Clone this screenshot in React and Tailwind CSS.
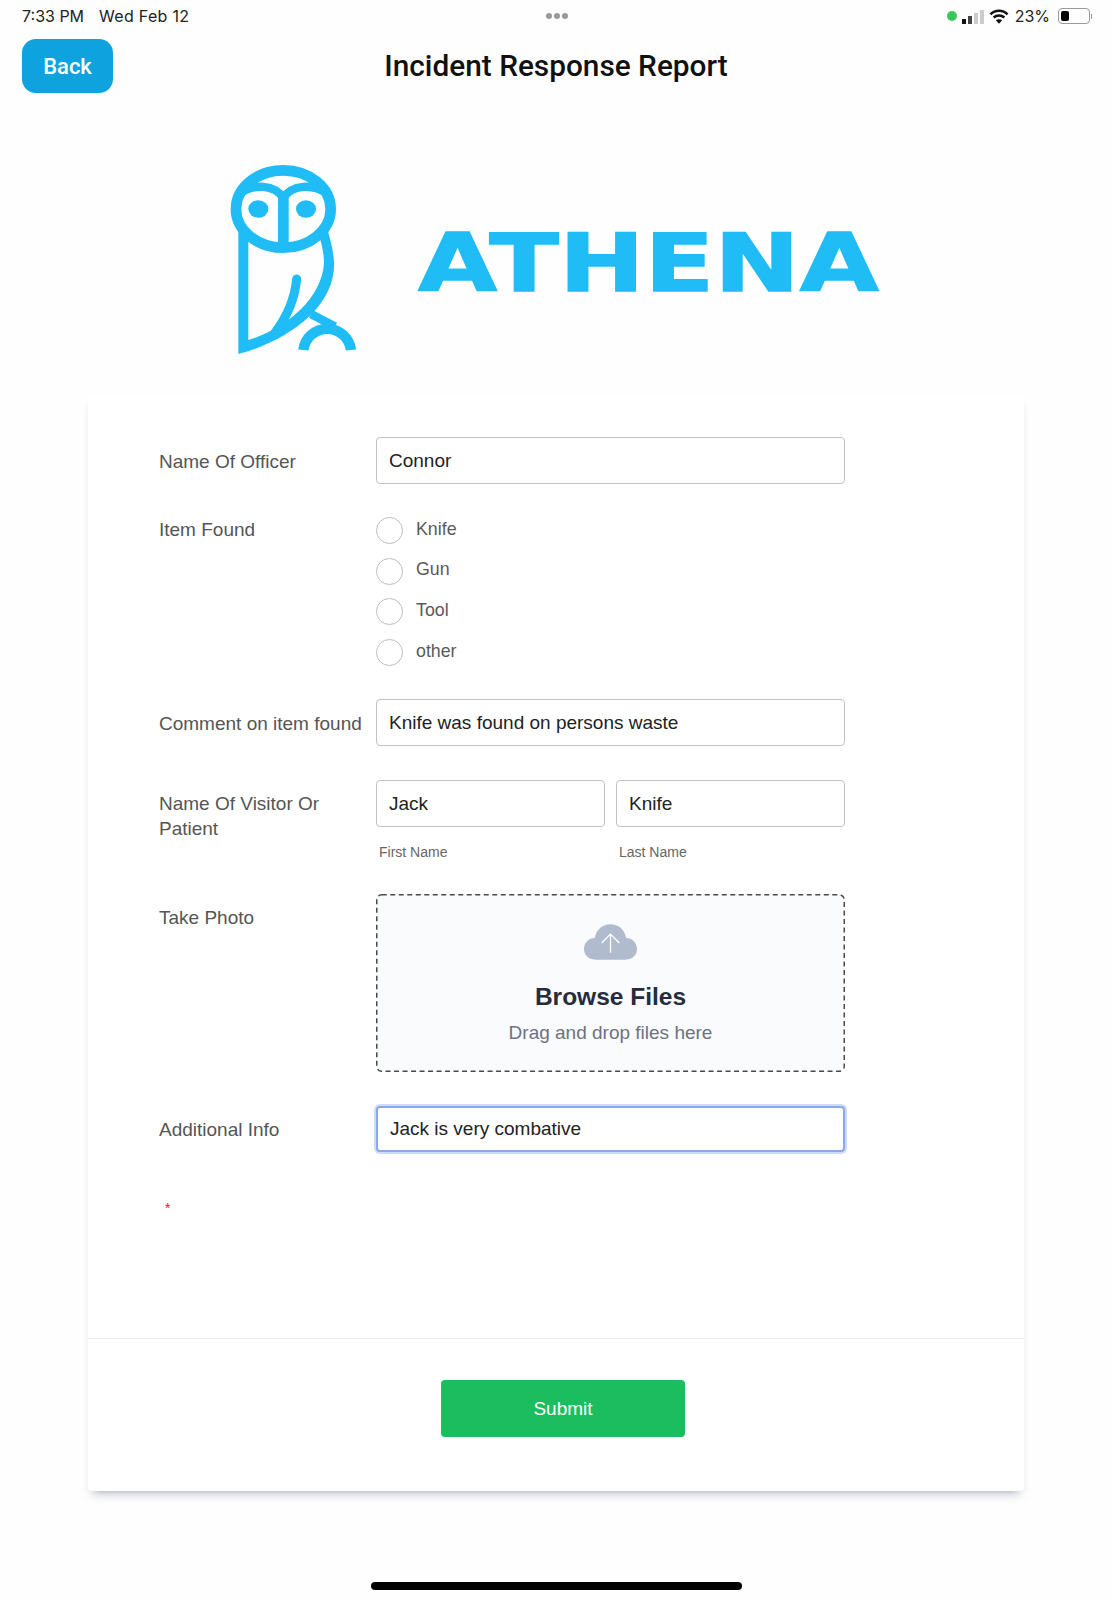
const sans = "font-['Liberation_Sans',Arial,sans-serif]";

function Owl() {
  return (
    <g fill="none" stroke="#1fbcf6" strokeWidth="32">
      <ellipse cx="220" cy="177" rx="142" ry="116" />
      <path d="M88 132 C130 100 195 103 220 145 C245 103 310 100 352 132" strokeWidth="25" />
      <path d="M220 140 V300" />
      <ellipse cx="145" cy="177" rx="30" ry="26" fill="#1fbcf6" stroke="none" />
      <ellipse cx="288" cy="177" rx="30" ry="26" fill="#1fbcf6" stroke="none" />
      <path
        d="M85 240 H115 V570 C220 540 335 450 342 340 C342 310 335 280 325 250 L352 238 C360 265 369 295 372 335 C380 470 230 575 85 612 Z"
        fill="#1fbcf6"
        stroke="none"
      />
      <path d="M260 387 C255 440 235 495 195 548" strokeLinecap="round" strokeWidth="27" />
      <path d="M303 492 L375 530" strokeWidth="26" />
      <path d="M280 600 A72 72 0 0 1 423 600" strokeWidth="31" />
    </g>
  );
}

function Logo() {
  return (
    <svg viewBox="0 0 2040 660" className="w-[680px] h-[220px] block">
      <Owl />
      <text
        x="624"
        y="423"
        textLength="1383"
        lengthAdjust="spacingAndGlyphs"
        fontFamily="'DejaVu Sans', sans-serif"
        fontWeight="700"
        fontSize="243"
        fill="#1fbcf6"
        stroke="#1fbcf6"
        strokeWidth="4"
      >
        ATHENA
      </text>
    </svg>
  );
}

function StatusBar() {
  return (
    <div className="h-8 grid grid-cols-[1fr_auto_1fr] items-center pl-[22px] pr-[20px] font-['Inter',sans-serif] text-[16px] text-[#222]">
      <div className="flex gap-[15px]">
        <span>7:33 PM</span>
        <span className="tracking-[0.3px]">Wed Feb 12</span>
      </div>
      <div className="flex gap-[2px]">
        <span className="size-[6px] rounded-full bg-[#9a9a9a]" />
        <span className="size-[6px] rounded-full bg-[#9a9a9a]" />
        <span className="size-[6px] rounded-full bg-[#9a9a9a]" />
      </div>
      <div className="flex items-center justify-end gap-[5px]">
        <span className="size-[10px] rounded-full bg-[#36c85c]" />
        <svg width="22" height="14" viewBox="0 0 22 14" className="mt-[1px]">
          <rect x="0" y="9" width="4" height="5" fill="#111" />
          <rect x="6" y="6" width="4" height="8" fill="#444" />
          <rect x="12" y="3" width="4" height="11" fill="#ccc" />
          <rect x="18" y="0" width="4" height="14" fill="#ccc" />
        </svg>
        <svg width="20" height="15" viewBox="0 0 18 14" fill="none" stroke="#111" strokeWidth="2.4">
          <path d="M1 5 C5.5 0.5 12.5 0.5 17 5" />
          <path d="M4 8 C6.8 5.5 11.2 5.5 14 8" />
          <path d="M9 13.8 L6 10.6 C7.6 9.2 10.4 9.2 12 10.6 Z" fill="#111" stroke="none" />
        </svg>
        <span className="ml-[1px]">23%</span>
        <div className="flex items-center ml-[3px]">
          <div className="w-[32px] h-[16px] rounded-[4px] border border-[#999] p-[2px]">
            <div className="w-[8px] h-full rounded-[2px] bg-black" />
          </div>
          <div className="w-[1px] h-[5px] bg-[#999] ml-[1px]" />
        </div>
      </div>
    </div>
  );
}

function Input({ value, className = "" }) {
  return (
    <div className={`h-[47px] flex items-center px-[12px] pt-[2px] bg-white border border-[#c2c2c2] rounded-[4px] text-[19px] text-[#222] ${className}`}>
      {value}
    </div>
  );
}

function Label({ children, className = "" }) {
  return <div className={`w-[217px] shrink-0 text-[19px] leading-[24.5px] text-[#555] ${className}`}>{children}</div>;
}

function Radio({ label }) {
  return (
    <div className="flex items-center h-[27px]">
      <span className="size-[27px] rounded-full border border-[#bdbdbd] bg-white" />
      <span className="ml-[13px] text-[17.8px] text-[#5a5a5a] -mt-[3px]">{label}</span>
    </div>
  );
}

function Cloud() {
  return (
    <svg width="53" height="36" viewBox="0 0 54 36">
      <path
        d="M12 36 C4 36 0 31 0 25 C0 19 5 14 11 14 C13 5 19 0 27 0 C35 0 41 5 43 14 C49 14 54 19 54 25 C54 31 50 36 42 36 Z"
        fill="#b0bccd"
      />
      <path d="M27 29 V10 M18 19 L27 10 L36 19" fill="none" stroke="#fff" strokeWidth="1.3" />
    </svg>
  );
}

export default function App() {
  return (
    <div className={`w-full h-[1600px] bg-[#fefefe] overflow-hidden ${sans}`}>
      <StatusBar />
      <div className="mt-[7px] h-[54px] px-[22px] grid grid-cols-[1fr_auto_1fr] items-center font-['Roboto',sans-serif]">
        <div>
          <button className="w-[91px] h-[54px] rounded-[14px] bg-[#0ea2de] text-white text-[22px] font-medium">Back</button>
        </div>
        <h1 className="text-[29.8px] font-medium text-[#111]">Incident Response Report</h1>
        <div />
      </div>

      <div className="mt-[57px] ml-[210px]">
        <Logo />
      </div>

      <div className="mt-[25px] mx-[88px] h-[1096px] bg-white rounded-b-[4px] shadow-[0_7px_8px_-3px_rgba(120,130,150,0.35),2px_12px_3px_-10px_rgba(120,130,150,0.1),-2px_12px_3px_-10px_rgba(120,130,150,0.1)] flex flex-col">
        <div className="h-[944px] pt-[42px] pl-[71px] border-b border-[#e8e9ed]">
          <div className="flex items-center">
            <Label className="pt-[3px]">Name Of Officer</Label>
            <Input value="Connor" className="w-[469px]" />
          </div>

          <div className="flex mt-[33px]">
            <Label className="pt-[1px]">Item Found</Label>
            <div className="flex flex-col gap-[13.7px]">
              <Radio label="Knife" />
              <Radio label="Gun" />
              <Radio label="Tool" />
              <Radio label="other" />
            </div>
          </div>

          <div className="flex items-center mt-[33px]">
            <Label className="pt-[3px]">Comment on item found</Label>
            <Input value="Knife was found on persons waste" className="w-[469px]" />
          </div>

          <div className="flex mt-[34px]">
            <Label className="w-[217px] pt-[12px] pr-[40px]">Name Of Visitor Or Patient</Label>
            <div className="w-[469px]">
              <div className="grid grid-cols-2 gap-[11px]">
                <Input value="Jack" />
                <Input value="Knife" />
              </div>
              <div className="grid grid-cols-2 gap-[11px] mt-[16px] text-[14px] leading-[18px] text-[#666]">
                <span className="pl-[3px]">First Name</span>
                <span className="pl-[3px]">Last Name</span>
              </div>
            </div>
          </div>

          <div className="flex mt-[33px]">
            <Label className="pt-[12px]">Take Photo</Label>
            <div className="relative w-[469px] h-[178px] rounded-[6px] bg-[#fafbfd] flex flex-col items-center pt-[30px]">
              <svg className="absolute inset-0 w-full h-full" fill="none">
                <rect x="0.75" y="0.75" width="467.5" height="176.5" rx="5" stroke="#4a4a4a" strokeWidth="1.5" strokeDasharray="5 3.5" />
              </svg>
              <Cloud />
              <div className="mt-[22px] text-[24.5px] leading-[30px] font-bold text-[#262c3e]">Browse Files</div>
              <div className="mt-[9px] text-[19px] leading-[24px] text-[#6b7283]">Drag and drop files here</div>
            </div>
          </div>

          <div className="flex items-center mt-[34px]">
            <Label className="pt-[3px]">Additional Info</Label>
            <div className="w-[469px] h-[46px] flex items-center px-[12px] bg-white rounded-[4px] border-2 border-[#8ba8ea] shadow-[0_0_0_2px_rgba(170,195,245,0.6)] text-[19px] text-[#222]">
              Jack is very combative
            </div>
          </div>

          <div className="mt-[47px] pl-[6px] text-[14px] leading-[18px] text-[#d22]">*</div>
        </div>

        <div className="pt-[41px] pl-[353px]">
          <button className="w-[244px] h-[57px] pt-[1px] rounded-[4px] bg-[#1bbd5e] text-white text-[19px]">Submit</button>
        </div>
      </div>

      <div className="mt-[91px] mx-auto w-[371px] h-[8px] rounded-full bg-black" />
    </div>
  );
}
